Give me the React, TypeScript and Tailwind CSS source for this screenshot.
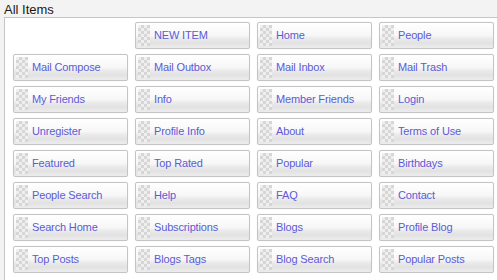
import React from "react";

const items: (string | null)[] = [
  null, "NEW ITEM", "Home", "People",
  "Mail Compose", "Mail Outbox", "Mail Inbox", "Mail Trash",
  "My Friends", "Info", "Member Friends", "Login",
  "Unregister", "Profile Info", "About", "Terms of Use",
  "Featured", "Top Rated", "Popular", "Birthdays",
  "People Search", "Help", "FAQ", "Contact",
  "Search Home", "Subscriptions", "Blogs", "Profile Blog",
  "Top Posts", "Blogs Tags", "Blog Search", "Popular Posts",
];

function Item({ label }: { label: string }) {
  return (
    <div className="h-[27px] flex items-center rounded-[2px] border border-[#c4c4c4] shadow-[0_0_1px_rgba(0,0,0,0.15)] bg-[linear-gradient(to_bottom,#ffffff_0%,#f7f7f7_50%,#ebebeb_62%,#e2e2e2_80%,#ececec_100%)]">
      <div className="ml-[2px] w-[12px] h-[21px] bg-[#e9e9e9] bg-[conic-gradient(#d6d6d6_25%,#efefef_0_50%,#d6d6d6_0_75%,#efefef_0)] bg-[length:6px_6px]" />
      <span className="ml-[4px] text-[11px] tracking-[-0.15px] text-[#5b5bd8] leading-none whitespace-nowrap">
        {label}
      </span>
    </div>
  );
}

export default function App() {
  return (
    <div
      className="w-[497px] h-[280px] overflow-hidden bg-[#f3f3f3]"
      style={{ fontFamily: '"Liberation Sans", Arial, sans-serif' }}
    >
      <div className="pl-[4px] pt-[3px] h-[17px] text-[13px] leading-[14px] text-[#1a1a1a]">All Items</div>
      <div className="ml-[4px] border border-[#c6c6c6] bg-white pl-[8px] pr-[4px] pt-[4px] pb-[10px] w-[500px]">
        <div className="grid grid-cols-[115px_115px_115px_115px] gap-x-[7px] gap-y-[5px]">
          {items.map((it, i) => (it ? <Item key={i} label={it} /> : <div key={i} />))}
        </div>
      </div>
    </div>
  );
}
